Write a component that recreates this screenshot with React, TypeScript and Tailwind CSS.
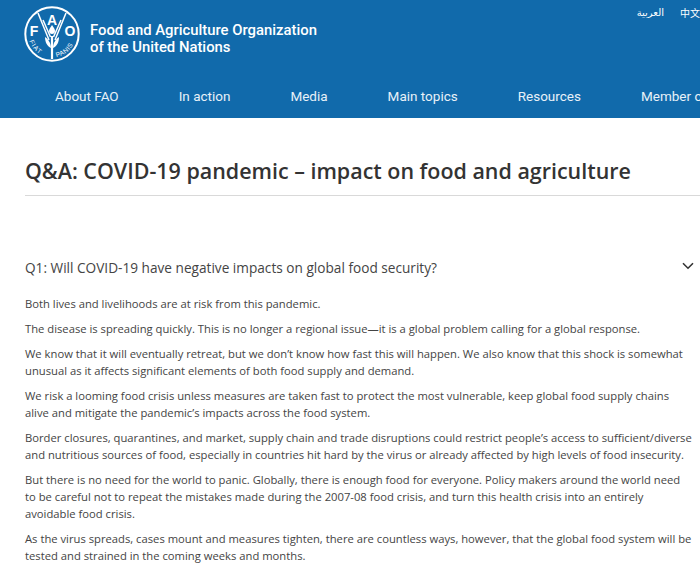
const NAV = ['About FAO', 'In action', 'Media', 'Main topics', 'Resources', 'Member countries']

const PARAGRAPHS = [
  ['Both lives and livelihoods are at risk from this pandemic.'],
  ['The disease is spreading quickly. This is no longer a regional issue—it is a global problem calling for a global response.'],
  [
    'We know that it will eventually retreat, but we don’t know how fast this will happen. We also know that this shock is somewhat',
    'unusual as it affects significant elements of both food supply and demand.',
  ],
  [
    'We risk a looming food crisis unless measures are taken fast to protect the most vulnerable, keep global food supply chains',
    'alive and mitigate the pandemic’s impacts across the food system.',
  ],
  [
    'Border closures, quarantines, and market, supply chain and trade disruptions could restrict people’s access to sufficient/diverse',
    'and nutritious sources of food, especially in countries hit hard by the virus or already affected by high levels of food insecurity.',
  ],
  [
    'But there is no need for the world to panic. Globally, there is enough food for everyone. Policy makers around the world need',
    'to be careful not to repeat the mistakes made during the 2007-08 food crisis, and turn this health crisis into an entirely',
    'avoidable food crisis.',
  ],
  [
    'As the virus spreads, cases mount and measures tighten, there are countless ways, however, that the global food system will be',
    'tested and strained in the coming weeks and months.',
  ],
]

function FaoLogo() {
  return (
    <svg width="56" height="56" viewBox="0 0 56 56" className="shrink-0" aria-hidden="true">
      <defs>
        <path id="fiatArc" d="M5.5 35A23.5 23.5 0 0 0 23 51" />
        <path id="panisArc" d="M32.5 51.2A23.5 23.5 0 0 0 51 33" />
      </defs>
      <circle cx="28" cy="28" r="26.7" fill="none" stroke="#fff" strokeWidth="2" />
      <g fill="none" stroke="#fff" strokeWidth="1.5">
        <path d="M14 7L25 34" />
        <path d="M42 7L31 34" />
        <path d="M19 14L26.5 31" />
        <path d="M37 14L29.5 31" />
        <path d="M28 30V53" strokeWidth="2.2" />
      </g>
      <path d="M28 19C30 22 31 23.5 31 25C31 26.8 29.7 28 28 28C26.3 28 25 26.8 25 25C25 23.5 26 22 28 19Z" fill="#fff" />
      <path d="M21 31C24 33 27 37 27 42C23 40 21 36 21 31ZM35 31C32 33 29 37 29 42C33 40 35 36 35 31Z" fill="#fff" />
      <text x="28" y="18.5" textAnchor="middle" fontSize="14" fontWeight="700" fill="#fff" fontFamily="Liberation Sans, sans-serif">A</text>
      <text x="10" y="30" textAnchor="middle" fontSize="14" fontWeight="700" fill="#fff" fontFamily="Liberation Sans, sans-serif">F</text>
      <text x="46" y="30" textAnchor="middle" fontSize="14" fontWeight="700" fill="#fff" fontFamily="Liberation Sans, sans-serif">O</text>
      <text fontSize="6.5" fill="#fff" fontFamily="Liberation Sans, sans-serif" letterSpacing="1">
        <textPath href="#fiatArc">FIAT</textPath>
      </text>
      <text fontSize="6.5" fill="#fff" fontFamily="Liberation Sans, sans-serif" letterSpacing="0.6">
        <textPath href="#panisArc">PANIS</textPath>
      </text>
    </svg>
  )
}

export default function App() {
  return (
    <div className="h-[565px] w-[700px] overflow-hidden bg-white font-['Open_Sans',sans-serif] text-[#333]">
      <header className="h-[118px] bg-[#116aab] text-white">
        <div className="flex h-[76px] items-start justify-between pl-[24px]">
          <div className="flex gap-[10px] pt-[6px]">
            <FaoLogo />
            <div className="pt-[16px] font-['Roboto',sans-serif] text-[14.85px] leading-[17px] font-medium">
              <div>Food and Agriculture Organization</div>
              <div>of the United Nations</div>
            </div>
          </div>
          <div className="flex gap-[16px] pt-[4px] text-[10px] leading-[18px]">
            <span className="font-['DejaVu_Sans',sans-serif]">العربية</span>
            <span className="w-[20px] overflow-hidden whitespace-nowrap font-['Noto_Sans_CJK_SC',sans-serif] text-[10px]">中文</span>
          </div>
        </div>
        <nav className="flex overflow-hidden pl-[25px] whitespace-nowrap text-[#e8f1f8]">
          {NAV.map((item) => (
            <span key={item} className="shrink-0 px-[30px] font-['Roboto',sans-serif] text-[13.5px] leading-[40px]">
              {item}
            </span>
          ))}
        </nav>
      </header>

      <main>
        <div className="ml-[25px] h-[78px] border-b border-[#d9d9d9] pt-[38px]">
          <h1 className="text-[21.45px] leading-[30px] font-semibold whitespace-nowrap text-[#333]">
            Q&amp;A: COVID-19 pandemic – impact on food and agriculture
          </h1>
        </div>

        <div className="mt-[57px] flex items-center justify-between pr-[6px] pl-[25px]">
          <h2 className="text-[13.65px] leading-[30px] whitespace-nowrap text-[#444]">
            Q1: Will COVID-19 have negative impacts on global food security?
          </h2>
          <svg width="12" height="8" viewBox="0 0 12 8" className="mb-[4px]" aria-hidden="true">
            <path d="M1 1.2L6 6.2L11 1.2" fill="none" stroke="#333" strokeWidth="1.6" />
          </svg>
        </div>

        <div className="mt-[12px] flex flex-col gap-[8px] pl-[25px] text-[11.24px] leading-[17px] whitespace-nowrap text-[#444]">
          {PARAGRAPHS.map((lines) => (
            <p key={lines[0]}>
              {lines.map((line) => (
                <span key={line} className="block">
                  {line}
                </span>
              ))}
            </p>
          ))}
        </div>
      </main>
    </div>
  )
}
